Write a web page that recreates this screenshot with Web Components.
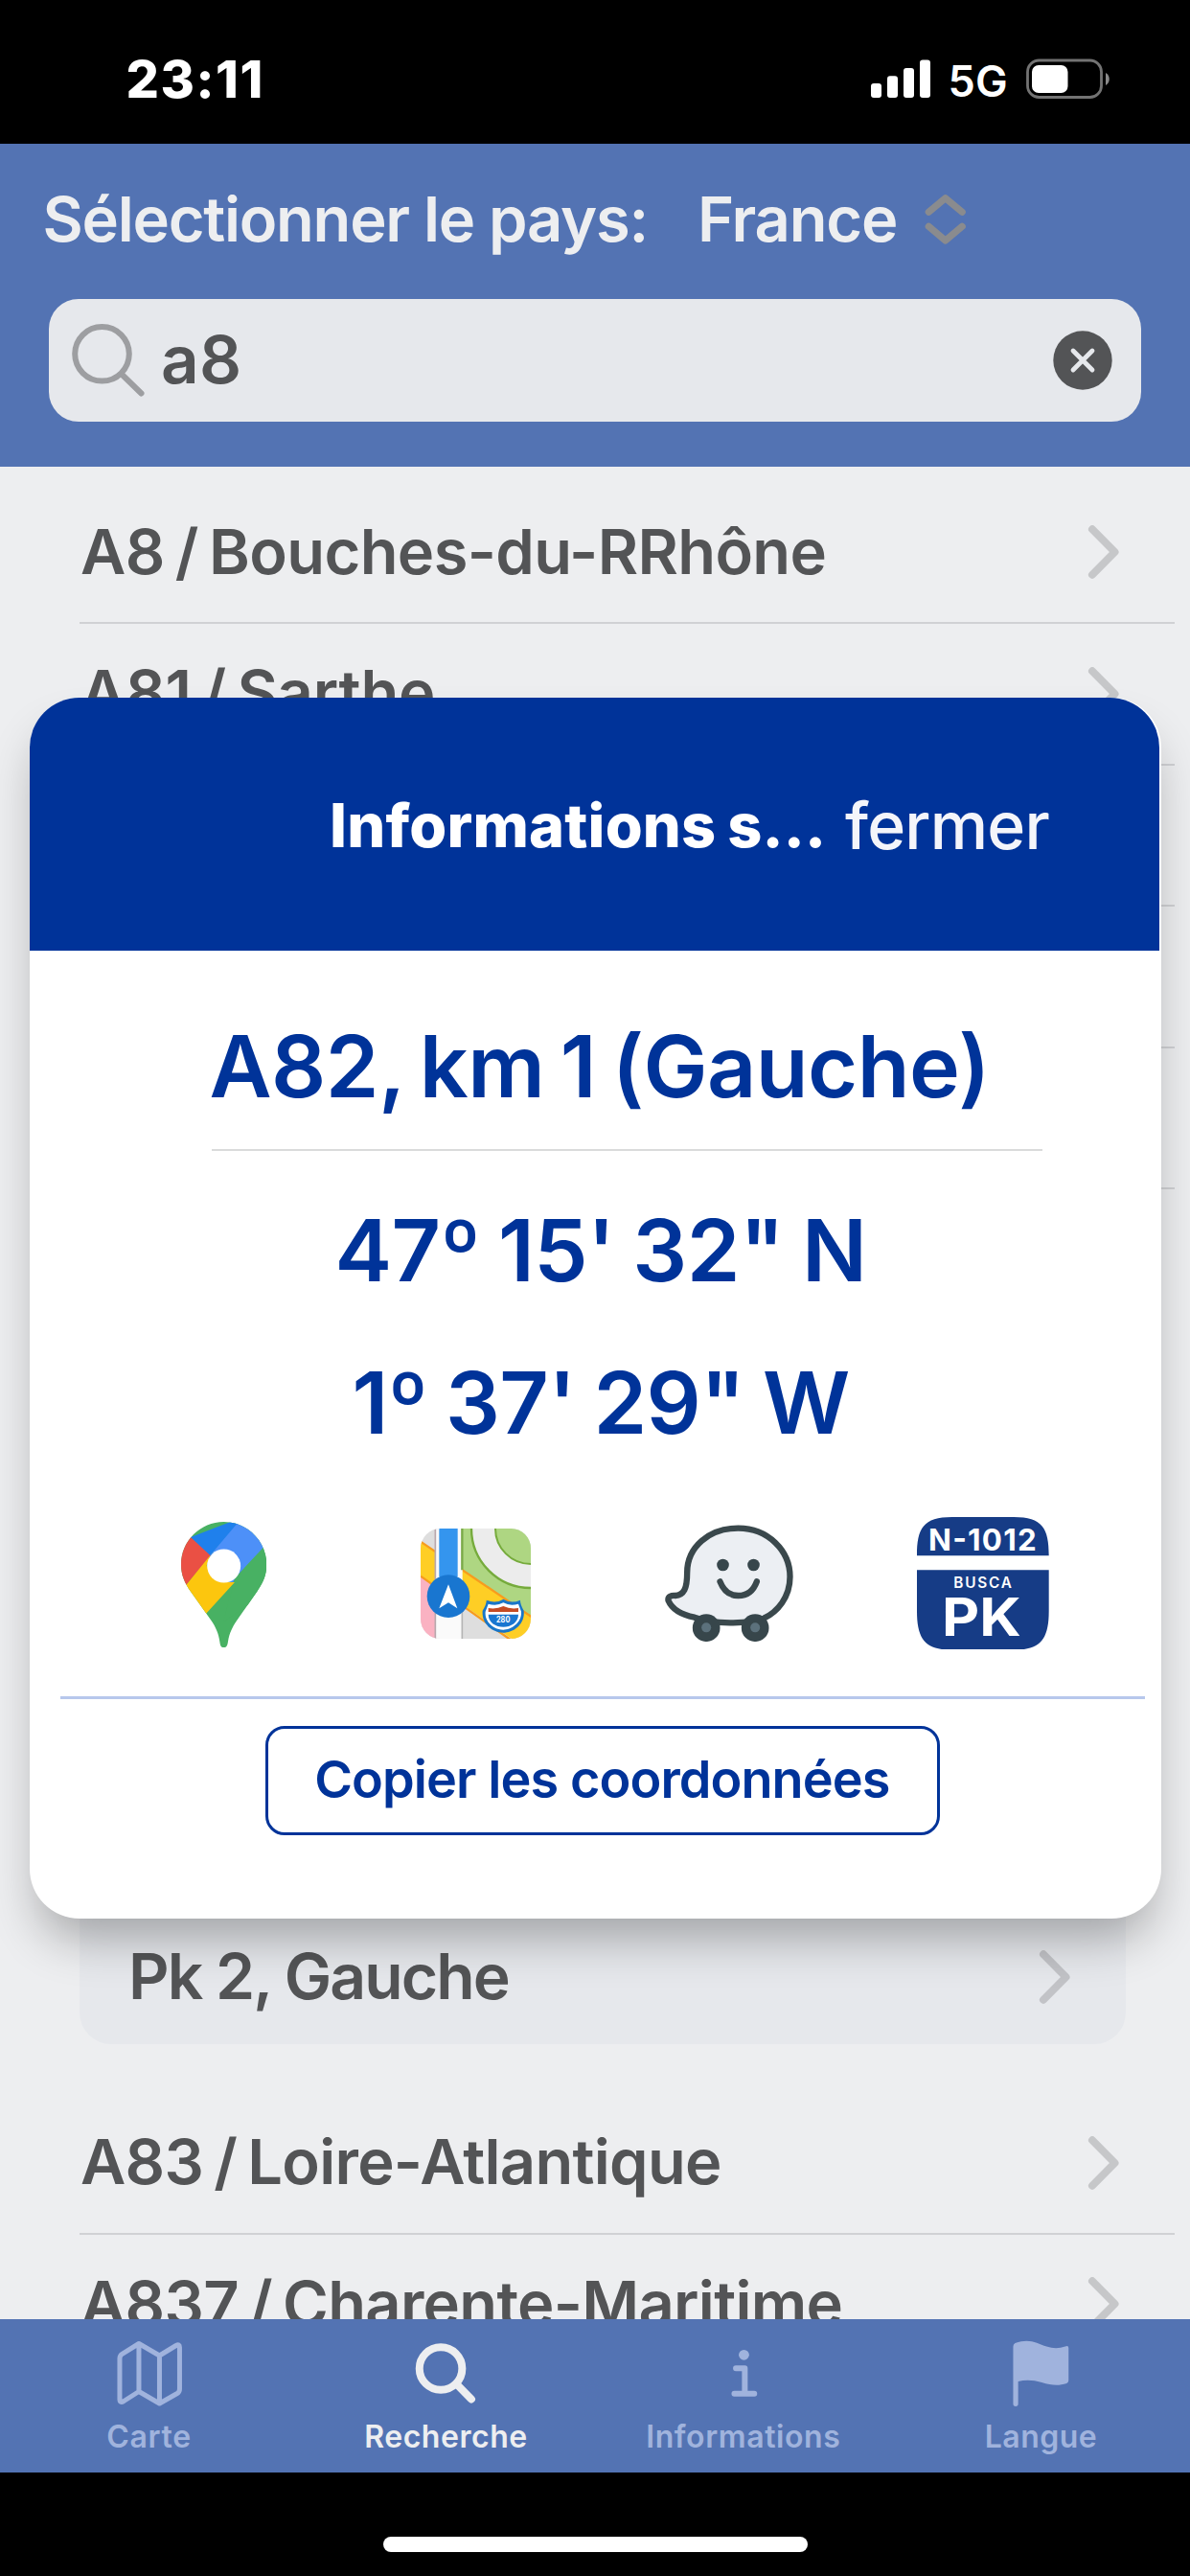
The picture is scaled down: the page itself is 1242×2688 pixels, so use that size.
<!DOCTYPE html>
<html lang="fr">
<head>
<meta charset="utf-8">
<title>Recherche</title>
<style>
html,body{margin:0;padding:0;background:#000}
body{width:1242px;height:2688px;overflow:hidden;font-family:Inter,"Liberation Sans",sans-serif}
</style>
</head>
<body>
<app-screen></app-screen>
<script>
const define = (name, html, init) => {
  const t = document.createElement('template');
  t.innerHTML = html;
  customElements.define(name, class extends HTMLElement {
    constructor() {
      super();
      this.attachShadow({ mode: 'open' }).appendChild(t.content.cloneNode(true));
    }
    connectedCallback() { if (init) init(this, this.shadowRoot); }
  });
};

/* One line of text whose tracking is set so that its ink spans `w` pixels. */
const pen = document.createElement('canvas').getContext('2d');
define('fit-text', `<style>
:host{display:block;flex:none;white-space:pre;line-height:1;overflow:visible}
</style><slot></slot>`, el => {
  const size = +el.getAttribute('size'), weight = el.getAttribute('weight') || 600, w = +el.getAttribute('w');
  const s = el.textContent;
  const gap = -size * (el.hasAttribute('gap') ? +el.getAttribute('gap') : 0.035);
  pen.font = `${weight} ${size}px Inter, "Liberation Sans", sans-serif`;
  const m = pen.measureText(s);
  const ink = m.actualBoundingBoxLeft + m.actualBoundingBoxRight + gap * (s.split(' ').length - 1);
  el.style.fontSize = size + 'px';
  el.style.fontWeight = weight;
  el.style.height = size + 'px';
  el.style.width = w + 'px';
  el.style.textIndent = m.actualBoundingBoxLeft + 'px';
  el.style.wordSpacing = gap + 'px';
  el.style.letterSpacing = (w - ink) / (s.length - 1) + 'px';
});

define('status-bar', `<style>
:host{display:flex;box-sizing:border-box;height:149.5px;padding:56px 84px 0 133.5px;background:#000;color:#fff;justify-content:space-between;align-items:flex-start}
.r{display:flex;align-items:flex-start}
.net{margin:6px 21px 0 22px}
svg{display:block}
</style>
<fit-text size="54" weight="800" w="138">23:11</fit-text>
<div class="r">
<svg width="62" height="50" viewBox="908.5 56 62 50" fill="#fff"><rect x="908.5" y="87" width="11" height="15" rx="3"/><rect x="925.5" y="79.3" width="11" height="22.7" rx="3"/><rect x="942.5" y="71" width="11" height="31" rx="3"/><rect x="959.5" y="62.5" width="11" height="39.500" rx="3"/></svg>
<fit-text class="net" size="45" weight="600" w="57.500">5G</fit-text>
<svg width="87" height="50" viewBox="1071 56 87 50"><rect x="1072.500" y="63" width="77" height="38.500" rx="12" fill="none" stroke="#737373" stroke-width="2.800"/><rect x="1077" y="68" width="37.500" height="29" rx="7" fill="#fff"/><path d="M1154 76c5 2.500 5 10.500 0 13z" fill="#8a8a8a"/></svg>
</div>`);

define('search-field', `<style>
:host{display:flex;align-items:center;box-sizing:border-box;width:1140px;height:127.500px;border-radius:31px;background:#e6e8ec;color:#535456;padding:0 30px 0 22px}
fit-text{margin:-1px auto 0 17px}
svg{display:block;flex:none}
</style>
<svg width="80" height="80" viewBox="73 336 80 80" fill="none" stroke="#9d9ea1" stroke-width="6"><circle cx="106.500" cy="369.300" r="28.300"/><path d="M127.500 391 147.500 410.500" stroke-linecap="round"/></svg>
<fit-text size="69" w="79"><slot></slot></fit-text>
<svg width="62" height="62" viewBox="0 0 62 62"><circle cx="31" cy="31" r="30.700" fill="#535456"/><path d="M21 21l20 20m0-20l-20 20" stroke="#e6e8ec" stroke-width="4.800" stroke-linecap="round"/></svg>`,
(el, root) => {
  const f = root.querySelector('fit-text');
  f.textContent = el.getAttribute('value');
  f.replaceWith(f.cloneNode(true));
});

define('search-header', `<style>
:host{display:flex;flex-direction:column;box-sizing:border-box;height:337.500px;background:#5373b3;color:#edeef0;padding:46px 0 0 51px}
.r{display:flex;height:65px;margin:0 0 51.500px -3.500px;align-items:flex-start}
.c{margin-left:59.500px}
svg{display:block;margin:4px 0 0 29px}
</style>
<div class="r"><fit-text size="65" weight="560" w="625" gap="0">Sélectionner le pays:</fit-text><fit-text class="c" size="65" weight="580" w="203">France</fit-text>
<svg width="46" height="58" viewBox="964 200 46 58" fill="none" stroke="#8a8b8e" stroke-width="7.200" stroke-linecap="round" stroke-linejoin="round"><path d="M969.300 221.300 986.700 206.800 1004.200 221.300M969.300 236.300 986.700 251 1004.200 236.300"/></svg></div>
<search-field value="a8"></search-field>`);

const chevron = c => `<svg width="34" height="58" viewBox="0 0 34 58" fill="none" stroke="${c}" stroke-width="8" stroke-linecap="round" stroke-linejoin="round"><path d="M5 5.300 28.500 29 5 52.700"/></svg>`;

define('road-row', `<style>
:host{display:flex;align-items:center;justify-content:space-between;box-sizing:border-box;flex:none;height:147.600px;margin:0 16px 0 83px;padding:0 57px 0 2px;border-bottom:2px solid #d0d1d4}
::slotted(fit-text){margin-top:-2px}
svg{display:block}
</style><slot></slot>${chevron('#c6c7c9')}`);

define('pk-panel', `<style>
:host{display:flex;flex-direction:column;justify-content:flex-end;box-sizing:border-box;flex:none;height:871.300px;margin:20px 67.500px 51.300px 83px;border-radius:33px;background:#e6e8ec}
.row{display:flex;height:139.400px;align-items:center;justify-content:space-between;padding:0 56.500px 0 55px}
fit-text{margin-top:-2px}
svg{display:block}
</style><div class="row"><fit-text size="66" weight="580" w="394" gap="0">Pk 2, Gauche</fit-text>${chevron('#c2c3c7')}</div>`);

define('road-list', `<style>
:host{display:flex;flex-direction:column;box-sizing:border-box;height:1933px;padding-top:16.400px;background:#edeef0;color:#535456;overflow:hidden}
</style>
<road-row><fit-text size="65" weight="580" w="775.500" gap="0.07">A8 / Bouches-du-RRhône</fit-text></road-row>
<road-row><fit-text size="65" weight="580" w="367" gap="0.07">A81 / Sarthe</fit-text></road-row>
<road-row><span></span></road-row><road-row><span></span></road-row><road-row><span></span></road-row>
<pk-panel></pk-panel>
<road-row><fit-text size="65" weight="580" w="666" gap="0.07">A83 / Loire-Atlantique</fit-text></road-row>
<road-row><fit-text size="65" weight="580" w="792.500" gap="0.07">A837 / Charente-Maritime</fit-text></road-row>`);

define('tab-item', `<style>
:host{display:flex;flex-direction:column;align-items:center;flex:1;color:#a0b3dd;padding-top:20px;gap:14.500px}
:host([active]){color:#edeef0}
</style><slot name="icon"></slot><slot></slot>`);

define('tab-bar', `<style>
:host{display:flex;height:160px;background:#5373b3}
svg{display:block}
</style>
<tab-item><svg slot="icon" width="80" height="72" viewBox="115.250 2440 80 72" fill="none" stroke="currentColor" stroke-width="5" stroke-linejoin="round"><path d="M125.200 2461q0-3 2.500-4.700L145.200 2445.500 166.700 2458 184 2447.500q3.700-2 3.700 2V2493q0 3-2.500 4.500L166.700 2508 145.200 2495.500 129.500 2505.500q-4.300 2.500-4.300-2zM145.200 2445.500v50M166.700 2458v50"/></svg><fit-text size="32" weight="560" w="86">Carte</fit-text></tab-item>
<tab-item active><svg slot="icon" width="80" height="72" viewBox="425.750 2440 80 72" fill="none" stroke="currentColor" stroke-width="8"><circle cx="459.800" cy="2471.500" r="22.300"/><path d="M476.500 2488 491.700 2503.500" stroke-linecap="round"/></svg><fit-text size="32" weight="580" w="167">Recherche</fit-text></tab-item>
<tab-item><svg slot="icon" width="80" height="72" viewBox="736.250 2440 80 72" fill="none" stroke="currentColor" stroke-width="6" stroke-linecap="round" stroke-linejoin="round"><circle cx="776.700" cy="2457.300" r="5.400" fill="currentColor" stroke="none"/><path d="M768.300 2471.200h9.300V2497.500M766.700 2497.700h20.800"/></svg><fit-text size="32" weight="560" w="200">Informations</fit-text></tab-item>
<tab-item><svg slot="icon" width="80" height="72" viewBox="1046.750 2440 80 72" fill="currentColor"><path d="M1057.200 2448.500q0-2.500 2-3.500C1074 2439.500 1082 2445 1092 2448.500q10 3.500 19.500 0 3.500-1.500 3.500 1.500V2484q0 2-2 3C1104 2490 1097 2489 1087 2486q-13-4-24.600-1v23.300a2.600 2.600 0 0 1-5.200 0z"/></svg><fit-text size="32" weight="560" w="114">Langue</fit-text></tab-item>`);

define('home-indicator', `<style>
:host{display:flex;justify-content:center;height:108px;background:#000;box-sizing:border-box;padding-top:66.500px}
i{display:block;width:443px;height:16px;border-radius:8px;background:#fff}
</style><i></i>`);

define('map-links', `<style>
:host{display:flex;align-items:center;height:138.700px;padding-left:158px}
svg{display:block;flex:none;font-family:Inter,"Liberation Sans",sans-serif;font-weight:700}
.a{margin-top:3px}.b{margin-left:161px}.c{margin-left:140px}.d{margin-left:128.700px}
</style>
<svg class="a" width="89.300" height="131" viewBox="117 87 268 393">
<defs><clipPath id="pin"><path d="M251 87C325 87 385 147 385 221C385 253 374 278 355 305L291 397C277 418 268 436 264 462C262 475 260 480 251 480C241 480 240 475 238 462C234 436 226 418 212 397L147 305C128 278 117 253 117 221C117 147 177 87 251 87Z"/></clipPath></defs>
<g clip-path="url(#pin)"><rect x="110" y="80" width="280" height="405" fill="#48b163"/>
<path d="M110 105 150 137 212 190 131 287 100 300z" fill="#ea5044"/>
<path d="M147 135 290 80 300 90 208 192z" fill="#1f80ec"/>
<path d="M292 93 340 80 400 140 372 171 250 310 208 192z" fill="#4d90f8"/>
<path d="M285 263 372 170 395 150V300L250 400z" fill="#48b163"/>
<path d="M208 192 131 287 192 378 285 276 251 276 197 225z" fill="#fcc60e"/></g>
<circle cx="251" cy="225" r="52.500" fill="#fff"/></svg>
<svg class="b" width="115" height="115" viewBox="868 105 345 345">
<defs><clipPath id="mp"><rect x="868" y="105" width="345" height="345" rx="62"/></clipPath></defs>
<g clip-path="url(#mp)"><rect x="868" y="105" width="345" height="345" fill="#dedede"/>
<path d="M868 255 915 290V450H868z" fill="#fab2c2"/>
<path d="M996 105H1213V390L996 240z" fill="#aed682"/>
<circle cx="1213" cy="105" r="149" fill="none" stroke="#ececec" stroke-width="76"/>
<circle cx="1213" cy="105" r="186" fill="none" stroke="#76ab3c" stroke-width="7"/><circle cx="1213" cy="105" r="111" fill="none" stroke="#76ab3c" stroke-width="6"/>
<path d="M868 148 1225 390V500L868 252z" fill="#fece25"/><path d="M868 146 1225 388M868 254 1200 489" stroke="#f79c1e" stroke-width="7"/>
<path d="M915 105h84v345h-84z" fill="#fafafa"/><path d="M914 105V450" stroke="#b9a7ad" stroke-width="5"/><path d="M998 105V235" stroke="#7aa947" stroke-width="7"/><path d="M998 360V450" stroke="#b5b5b5" stroke-width="5"/>
<path d="M926 105h58v150h-58z" fill="#3495ee"/></g>
<circle cx="955" cy="317" r="67" fill="#1976d0"/><path d="M955 280 983 355 955 337 926 355z" fill="#fff"/>
<path d="M1074 329Q1102 342 1127 326Q1152 342 1180 329Q1179 341 1191 362C1196 405 1158 431 1127 431C1095 431 1058 405 1062 362Q1075 341 1074 329Z" fill="#1976c8"/>
<path d="M1080 341Q1106 349 1127 337Q1148 349 1174 341L1183 365C1186 400 1151 422 1127 422C1102 422 1067 400 1071 365Z" fill="#fff"/>
<path d="M1080 366V354Q1106 358 1127 348Q1148 358 1174 354V366z" fill="#c44b24"/><path d="M1080 374H1174C1174 399 1150 413 1127 413C1103 413 1080 399 1080 374z" fill="#1976d0"/>
<text x="1105" y="400" font-size="26" textLength="43" lengthAdjust="spacingAndGlyphs" fill="#fff">280</text></svg>
<svg class="c" width="134" height="122.700" viewBox="103 95 401 368">
<path d="M172 245C172 165 240 106 332 106C425 106 494 176 494 258C494 322 455 368 412 388C365 408 250 406 195 385C155 377 125 360 113 332C111 319 123 316 135 317C162 315 172 295 172 245Z" fill="#eceff3" stroke="#3a484c" stroke-width="19" stroke-linejoin="round"/>
<path d="M275 273Q292 317 332 317Q374 317 390 273" fill="none" stroke="#3a484c" stroke-width="19" stroke-linecap="round"/>
<circle cx="284" cy="221" r="19" fill="#37464b"/><circle cx="380" cy="221" r="19" fill="#37464b"/>
<circle cx="232" cy="418" r="43" fill="#37464b"/><circle cx="385" cy="418" r="43" fill="#37464b"/><circle cx="232" cy="417" r="15" fill="#5c717c"/><circle cx="385" cy="417" r="15" fill="#5c717c"/></svg>
<svg class="d" width="137.700" height="138.700" viewBox="890 70 413 416">
<path d="M890 191C890 105 910 70 1000 70H1193C1283 70 1303 105 1303 191zM890 236H1303V365C1303 455 1275 486 1193 486H1000C918 486 890 455 890 365z" fill="#163c86"/>
<g fill="#fff"><text x="926" y="175" font-size="94" textLength="338" lengthAdjust="spacing">N-1012</text><text x="1005" y="291" font-size="46" font-weight="600" textLength="182" lengthAdjust="spacing">BUSCA</text><text x="968" y="443" font-size="165" textLength="248" lengthAdjust="spacingAndGlyphs">PK</text></g></svg>`);

define('info-card', `<style>
:host{display:flex;flex-direction:column;box-sizing:border-box;width:1180.500px;height:1274px;border-radius:52px;background:#fff;color:#039;box-shadow:0 30px 50px -10px rgba(0,0,0,.3)}
header{display:flex;box-sizing:border-box;width:1179px;height:264.300px;padding:98.500px 0 0 316px;background:#039;border-radius:52px 52px 0 0;color:#fff}
header .f{margin-left:24.500px;color:#f4f5fa}
header .t{margin-top:3.300px}
.place{margin:76px 0 0 189.500px}
.sep{width:867px;height:2px;background:#dadbdb;margin:41px 0 59px 190px}
.la{margin-left:322.500px}.lo{margin:70px 0 74px 340.500px}
.rule{width:1132px;height:3px;margin:48.500px 0 28.500px 32px;background:#b7c7ec}
.btn{display:flex;align-items:center;justify-content:center;box-sizing:border-box;width:704px;height:114px;margin-left:246px;border:3px solid #039;border-radius:20px;padding-bottom:3px}
</style>
<header><fit-text class="t" size="63" weight="800" w="510.500">Informations s…</fit-text><fit-text class="f" size="68" weight="520" w="212.500">fermer</fit-text></header>
<fit-text class="place" size="89.500" weight="590" w="807.500" gap="0.06">A82, km 1 (Gauche)</fit-text>
<div class="sep"></div>
<fit-text class="la" size="89.500" weight="590" w="545.500">47º 15' 32" N</fit-text>
<fit-text class="lo" size="89.500" weight="590" w="514.500">1º 37' 29" W</fit-text>
<map-links></map-links>
<div class="rule"></div>
<div class="btn"><fit-text size="54" weight="580" w="597.500" gap="0">Copier les coordonnées</fit-text></div>`);

define('app-screen', `<style>
:host{display:flex;flex-direction:column;position:relative;width:1242px;height:2688px;overflow:hidden}
status-bar,search-header,road-list,tab-bar,home-indicator{flex:none}
info-card{position:absolute;left:31px;top:728px}
</style>
<status-bar></status-bar><search-header></search-header><road-list></road-list><tab-bar></tab-bar><home-indicator></home-indicator><info-card></info-card>`);
</script>
</body>
</html>
